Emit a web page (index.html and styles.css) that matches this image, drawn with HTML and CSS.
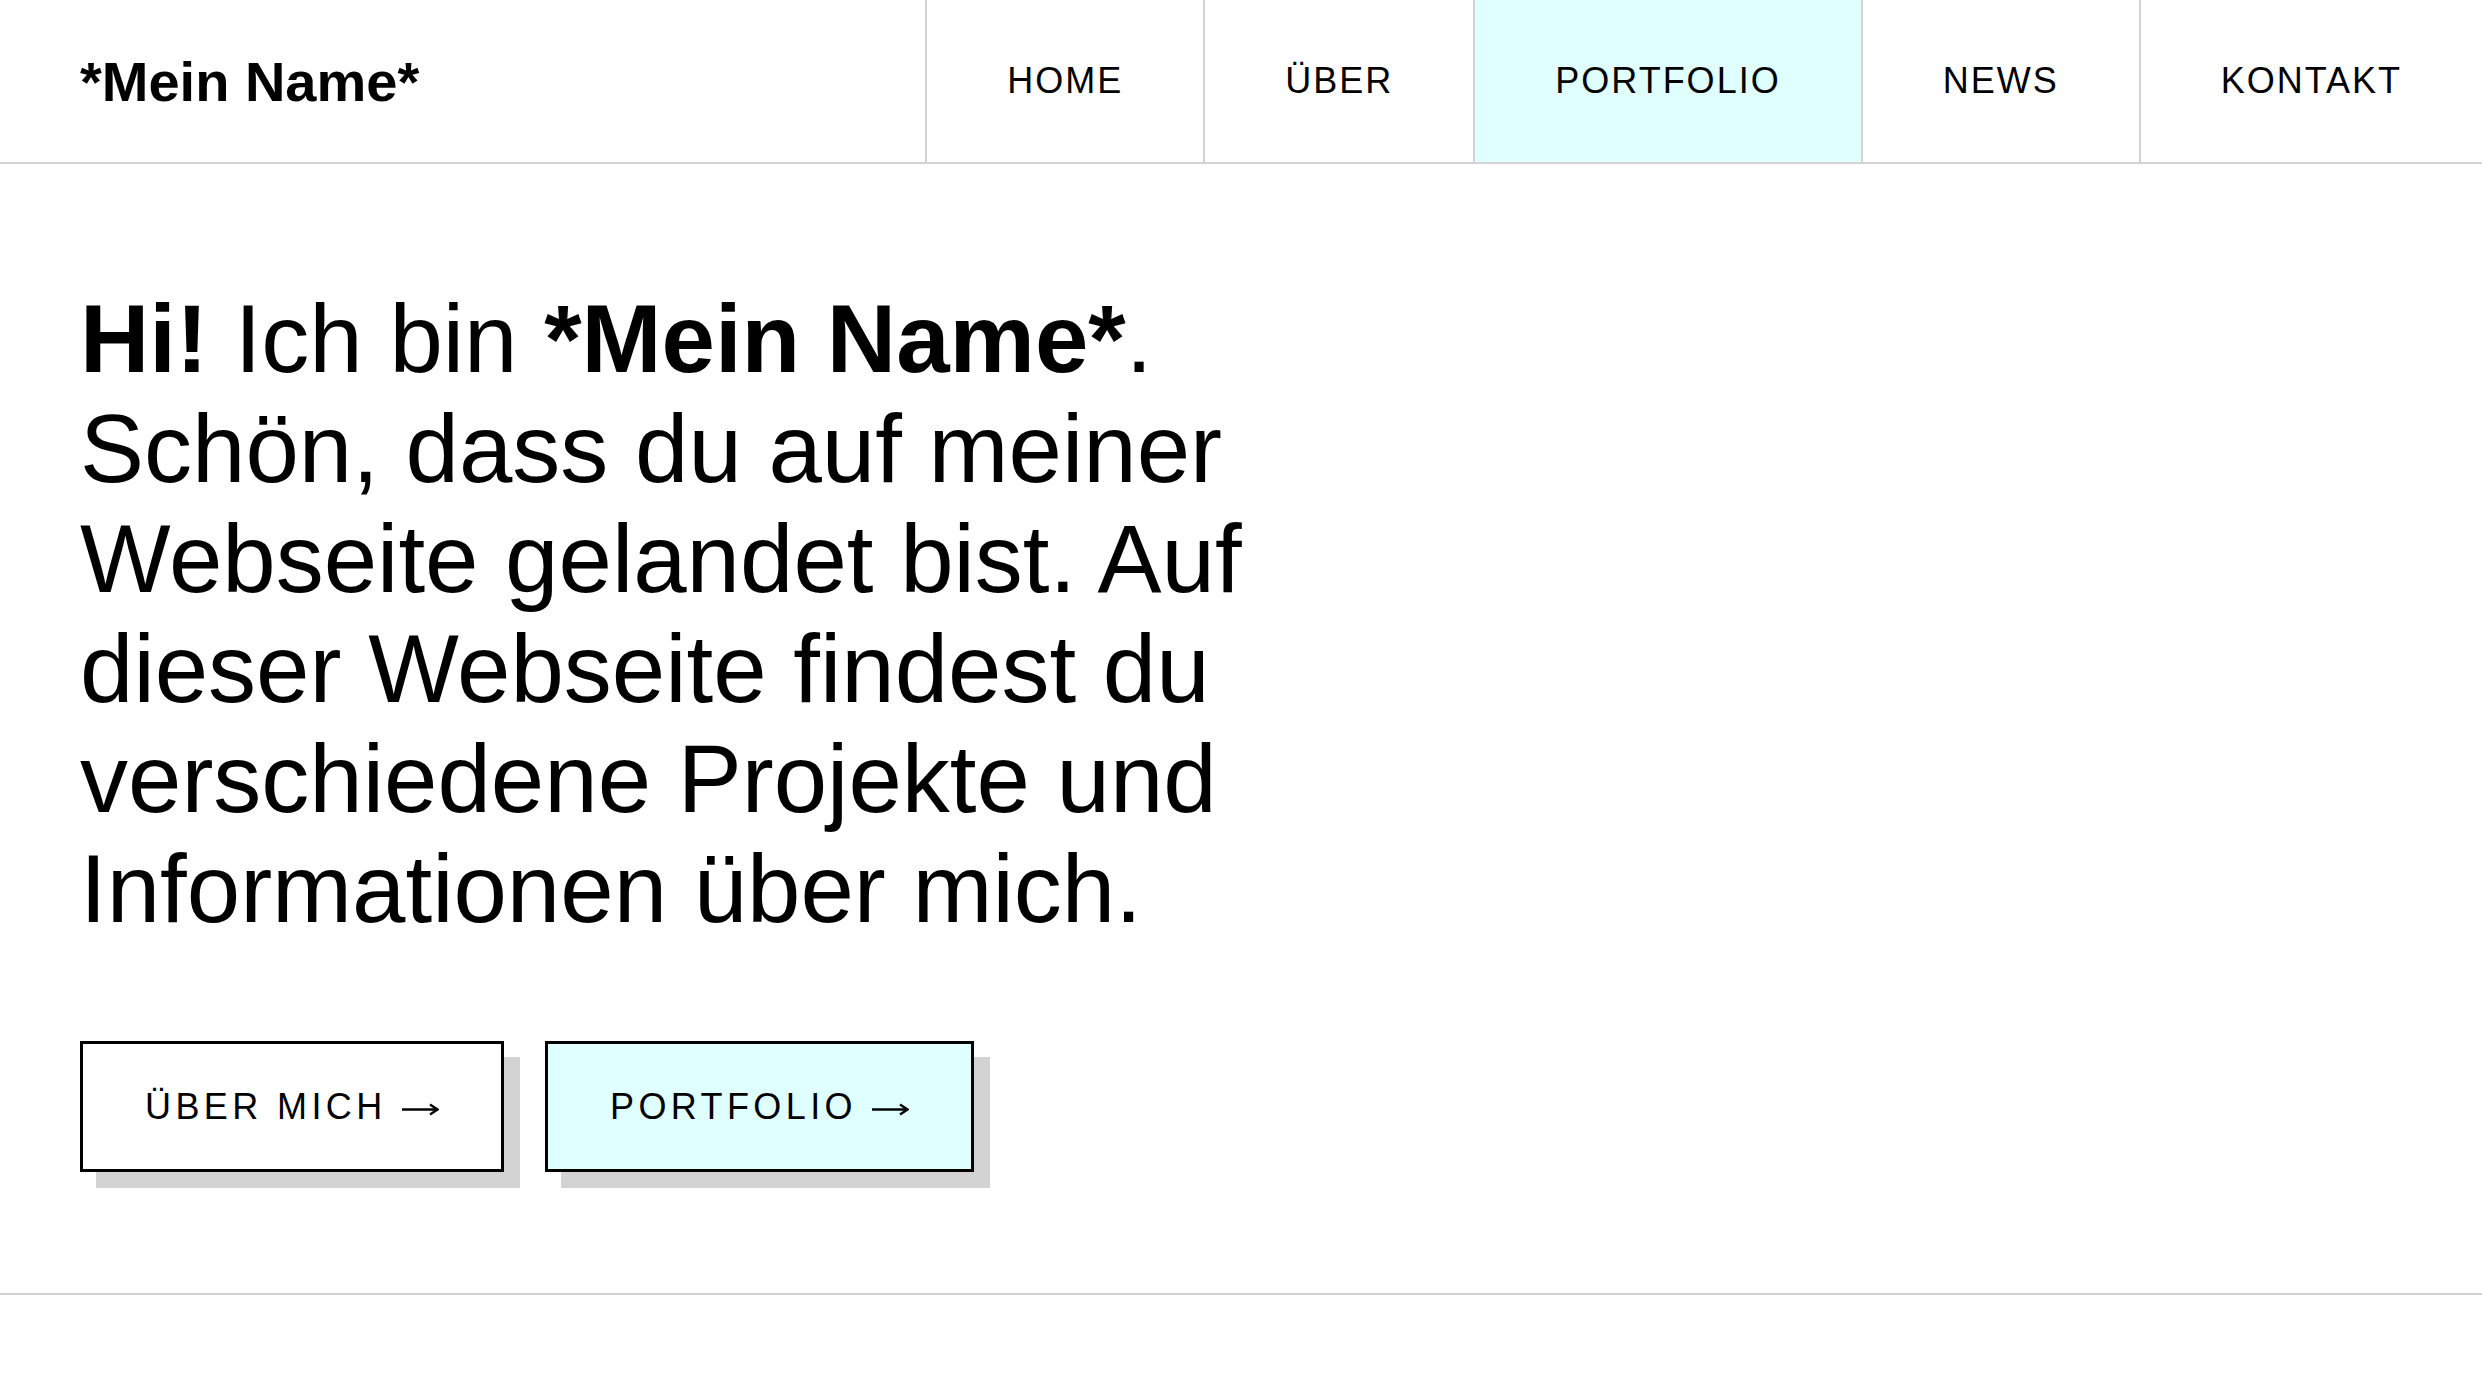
FILE: index.html
```html
<!DOCTYPE html>
<html lang="de">
<head>
<meta charset="utf-8">
<title>*Mein Name*</title>
<link rel="stylesheet" href="styles.css">
</head>
<body>
<header class="site-header">
  <a class="logo" href="#">*Mein Name*</a>
  <nav class="main-nav">
    <a class="nav-item" href="#">HOME</a>
    <a class="nav-item" href="#">ÜBER</a>
    <a class="nav-item nav-item-active" href="#">PORTFOLIO</a>
    <a class="nav-item" href="#">NEWS</a>
    <a class="nav-item" href="#">KONTAKT</a>
  </nav>
</header>
<main>
  <section class="hero">
    <p class="hero-text"><strong>Hi!</strong> Ich bin <strong>*Mein Name*</strong>. Schön, dass du auf meiner Webseite gelandet bist. Auf dieser Webseite findest du verschiedene Projekte und Informationen über mich.</p>
    <div class="hero-actions">
      <a class="btn" href="#">ÜBER MICH <svg class="arrow" viewBox="0 0 38 16" width="38" height="16" aria-label="→"><path d="M1 8.5 H36" /><path d="M29 3.5 L36.5 8.5 L29 13.5" /></svg></a>
      <a class="btn btn-accent" href="#">PORTFOLIO <svg class="arrow" viewBox="0 0 38 16" width="38" height="16" aria-label="→"><path d="M1 8.5 H36" /><path d="M29 3.5 L36.5 8.5 L29 13.5" /></svg></a>
    </div>
  </section>
</main>
</body>
</html>
```
FILE: styles.css
```css
html, body {
  margin: 0;
  padding: 0;
  background: #ffffff;
  color: #000000;
  font-family: "Liberation Sans", Arial, Helvetica, sans-serif;
}

a {
  color: #000000;
  text-decoration: none;
}

.site-header {
  display: flex;
  align-items: stretch;
  height: 162px;
  border-bottom: 2px solid #d3d3d3;
}

.logo {
  display: flex;
  align-items: center;
  padding-left: 80px;
  font-size: 56px;
  font-weight: bold;
}

.main-nav {
  display: flex;
  margin-left: auto;
}

.nav-item {
  display: flex;
  align-items: center;
  padding: 0 80px;
  border-left: 2px solid #d3d3d3;
  font-size: 36px;
  letter-spacing: 2px;
}

.nav-item-active {
  background: #e0ffff;
}

.hero {
  padding: 120px 80px 121px;
  border-bottom: 2px solid #d3d3d3;
}

.hero-text {
  margin: 0;
  max-width: 1300px;
  font-size: 96px;
  line-height: 110px;
}

.hero-text strong {
  font-weight: bold;
}

.hero-actions {
  display: flex;
  gap: 41px;
  margin-top: 97px;
}

.btn {
  display: block;
  padding: 42px 58px 42px 62px;
  border: 3px solid #000000;
  background: #ffffff;
  box-shadow: 16px 16px 0 #d3d3d3;
  font-size: 36px;
  line-height: 41px;
  letter-spacing: 4.4px;
  white-space: nowrap;
}

.btn-accent {
  background: #e0ffff;
}

.arrow {
  display: inline-block;
  vertical-align: 2px;
  margin-right: 4px;
  fill: none;
  stroke: #000000;
  stroke-width: 2.4;
  stroke-linecap: butt;
  stroke-linejoin: miter;
}
```
